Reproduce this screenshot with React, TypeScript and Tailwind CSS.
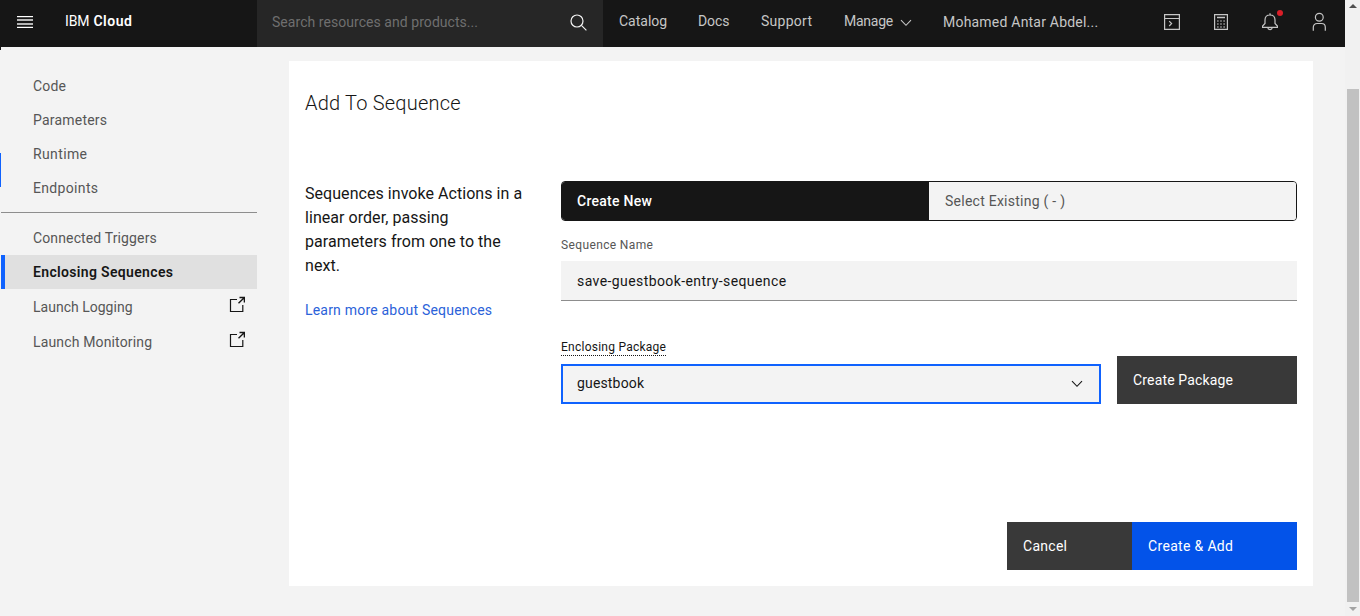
import type { ReactNode } from 'react';

const Chevron = ({ className }: { className: string }) => (
  <svg className={className} width="12" height="8" viewBox="0 0 12 8" fill="none" stroke="currentColor" strokeWidth="1.1">
    <path d="M1 1.2 6 6.3 11 1.2" />
  </svg>
);

const Launch = () => (
  <svg width="16" height="16" viewBox="0 0 16 16" fill="none" stroke="#161616" strokeWidth="1.2" className="mr-3 mb-1.5 shrink-0">
    <path d="M8 3.500H1.500v12h12.300V9" />
    <path d="M10.500 1.500h4.900V6.500M15.200 1.700 9.500 7.200" strokeWidth="1.4" />
  </svg>
);

const HeaderIcon = ({ children, badge = false }: { children: ReactNode; badge?: boolean }) => (
  <button className="flex h-full w-[49px] items-center justify-center">
    <span className="relative">
      <svg width="20" height="20" viewBox="0 0 20 20" fill="none" stroke="#c6c6c6" strokeWidth="1.2">
        {children}
      </svg>
      {badge && <i className="absolute -top-0.5 right-[-3px] size-1.5 rounded-full bg-[#da1e28]" />}
    </span>
  </button>
);

const NavItem = ({ label, tracking }: { label: string; tracking: string }) => (
  <a className={`flex h-[34px] items-center pl-[33px] ${tracking}`}>{label}</a>
);

function Header() {
  return (
    <header className="flex h-[47px] shrink-0 items-stretch bg-[#161616] text-[14px] text-[#c6c6c6]">
      <div className="flex w-[257px] items-center pb-1">
        <svg className="mt-px ml-[17px]" width="16" height="12" viewBox="0 0 16 12">
          <path d="M0 0h16v1H0zM0 11h16v1H0z" fill="#fff" />
          <path d="M0 3h16v2H0zM0 7h16v2H0z" fill="#b5b5b5" />
          <path d="M0 1h16v1H0zM0 10h16v1H0z" fill="#4a4a4a" />
        </svg>
        <span className="ml-8 tracking-[-0.1px] text-white">IBM</span>
        <span className="ml-1 font-semibold tracking-[0.5px] text-white">Cloud</span>
      </div>
      <div className="flex w-[346px] items-center justify-between bg-[#262626] pr-4 pb-0.5 pl-[15px]">
        <span className="tracking-[0.05px] text-[#6f6f6f]">Search resources and products...</span>
        <svg className="-mt-px" width="17" height="17" viewBox="0 0 17 17" fill="none" stroke="#f4f4f4" strokeWidth="1.2">
          <circle cx="7" cy="7" r="6" />
          <path d="m11.4 11.4 5 5" />
        </svg>
      </div>
      <nav className="flex items-center pb-1">
        <a className="ml-4 w-[79px]">Catalog</a>
        <a className="w-[63px] tracking-[-0.1px]">Docs</a>
        <a className="w-[83px] tracking-[0.27px]">Support</a>
        <a className="w-14 tracking-[-0.25px]">Manage</a>
        <Chevron className="mt-0.5" />
        <a className="mt-0.5 ml-[31px] tracking-[0.21px]">Mohamed Antar Abdel...</a>
      </nav>
      <div className="ml-auto flex items-center pr-[2px] pb-[3px]">
        <HeaderIcon>
          <path d="M2.600 2.600h14.800v14.800H2.600zM2.600 6.500h14.800" />
          <path d="M7.200 9.200 9.600 11.600 7.200 14" />
        </HeaderIcon>
        <HeaderIcon>
          <path d="M3.600 2.600h12.800v14.800H3.600z" />
          <path d="M6 5.500h8" strokeWidth="1.500" />
          <path d="M6 9h8M6 12h8M6 15h8" strokeDasharray="1.700 1.450" />
        </HeaderIcon>
        <HeaderIcon badge>
          <path d="M10 1.200v2M10 3c-3 0-5 2-5 5v3.500L2.600 14v1.400h14.800V14L15 11.500V8c0-3-2-5-5-5zM7.700 15.500c.3 2.700 4.300 2.700 4.600 0" />
        </HeaderIcon>
        <HeaderIcon>
          <circle cx="10.300" cy="5.200" r="3.900" />
          <path d="M4.300 18.700v-3.400c0-2.200 1.400-3.800 3.800-3.800h4.400c2.400 0 3.800 1.600 3.800 3.800v3.400" />
        </HeaderIcon>
      </div>
    </header>
  );
}

function Sidebar() {
  return (
    <aside className="relative w-[257px] shrink-0 pt-[22px] text-[14px] text-[#565656]">
      <i className="absolute top-0 left-0 h-[3px] w-px bg-[#161616]" />
      <i className="absolute top-[106px] left-0 h-[34px] w-px bg-[#0f62fe]" />
      <NavItem label="Code" tracking="tracking-[0.19px]" />
      <NavItem label="Parameters" tracking="tracking-[0.21px]" />
      <NavItem label="Runtime" tracking="tracking-[0.37px]" />
      <NavItem label="Endpoints" tracking="tracking-[0.33px]" />
      <hr className="mt-[7px] mb-2 ml-px border-t border-[#8d8d8d]" />
      <NavItem label="Connected Triggers" tracking="tracking-[0.13px]" />
      <a className="ml-px flex h-[34px] items-center border-l-4 border-[#0f62fe] bg-[#e0e0e0] pl-7 font-semibold tracking-[0.34px] text-[#161616]">
        Enclosing Sequences
      </a>
      <a className="flex h-[35px] items-center justify-between pt-[1px] pl-[33px] tracking-[0.01px]">
        Launch Logging
        <Launch />
      </a>
      <a className="flex h-[35px] items-center justify-between pt-[1px] pl-[33px] tracking-[0.15px]">
        Launch Monitoring
        <Launch />
      </a>
    </aside>
  );
}

function SequenceForm() {
  return (
    <main className="mt-[14px] ml-8 flex h-[525px] w-[1024px] flex-col bg-white px-4 pb-4 text-[#161616]">
      <h1 className="mt-7 text-[20px] leading-7 font-light tracking-[0.21px]">Add To Sequence</h1>
      <div className="mt-16 flex">
        <div className="w-64 pt-px">
          <p className="text-[16px] leading-6 tracking-[0.05px]">
            Sequences invoke Actions in a<br />
            linear order, passing<br />
            parameters from one to the<br />
            next.
          </p>
          <a className="mt-[22px] block text-[14px] leading-5 tracking-[0.2px] text-[#2b62d9]">Learn more about Sequences</a>
        </div>
        <div className="w-[736px]">
          <div className="flex h-10 overflow-hidden rounded border border-[#161616] text-[14px]">
            <button className="w-[367px] bg-[#161616] pl-[15px] text-left font-medium tracking-[0.28px] text-white">Create New</button>
            <button className="flex-1 bg-[#f3f3f3] pl-4 text-left tracking-[0.25px] text-[#565656]">Select Existing ( - )</button>
          </div>
          <label className="mt-4 block text-[12px] leading-4 tracking-[0.37px] text-[#565656]">Sequence Name</label>
          <div className="mt-2 flex h-10 items-center border-b border-[#8d8d8d] bg-[#f3f3f3] pt-0.5 pl-4 text-[14px] tracking-[0.41px]">
            save-guestbook-entry-sequence
          </div>
          <div className="mt-[38px] flex items-end gap-4">
            <div className="flex w-[540px] flex-col items-start">
              <label className="border-b border-dotted border-[#161616] text-[12px] leading-4 tracking-[0.25px]">Enclosing Package</label>
              <div className="mt-2 flex h-10 w-full items-center justify-between border-2 border-[#0f62fe] bg-[#f3f3f3] pr-4 pb-px pl-3.5 text-[14px] tracking-[0.16px]">
                guestbook
                <Chevron className="" />
              </div>
            </div>
            <button className="h-12 w-[180px] bg-[#393939] pl-4 text-left text-[14px] tracking-[0.16px] text-white">Create Package</button>
          </div>
        </div>
      </div>
      <div className="mt-auto flex h-12 justify-end text-[14px] text-white">
        <button className="w-[125px] bg-[#393939] pl-4 text-left tracking-[0.28px]">Cancel</button>
        <button className="w-[165px] bg-[#0353e9] pl-4 text-left tracking-[0.33px]">Create &amp; Add</button>
      </div>
    </main>
  );
}

function Scrollbar() {
  return (
    <div className="flex w-[15px] shrink-0 flex-col items-center bg-[#f1f1f1]">
      <svg width="15" height="15" viewBox="0 0 15 15">
        <path d="M4 8 8 4l4 4z" fill="#505050" />
      </svg>
      <div className="mt-[74px] ml-px w-3 flex-1 bg-[#c1c1c1]" />
      <svg width="15" height="14" viewBox="0 0 15 14">
        <path d="M4 5h8L8 9z" fill="#a3a3a3" />
      </svg>
    </div>
  );
}

export default function App() {
  return (
    <div className="flex h-[616px] w-[1360px] overflow-hidden bg-[#f3f3f3] font-['Roboto','Liberation_Sans',sans-serif]">
      <div className="flex w-[1345px] flex-col">
        <Header />
        <div className="flex flex-1">
          <Sidebar />
          <SequenceForm />
        </div>
      </div>
      <Scrollbar />
    </div>
  );
}
